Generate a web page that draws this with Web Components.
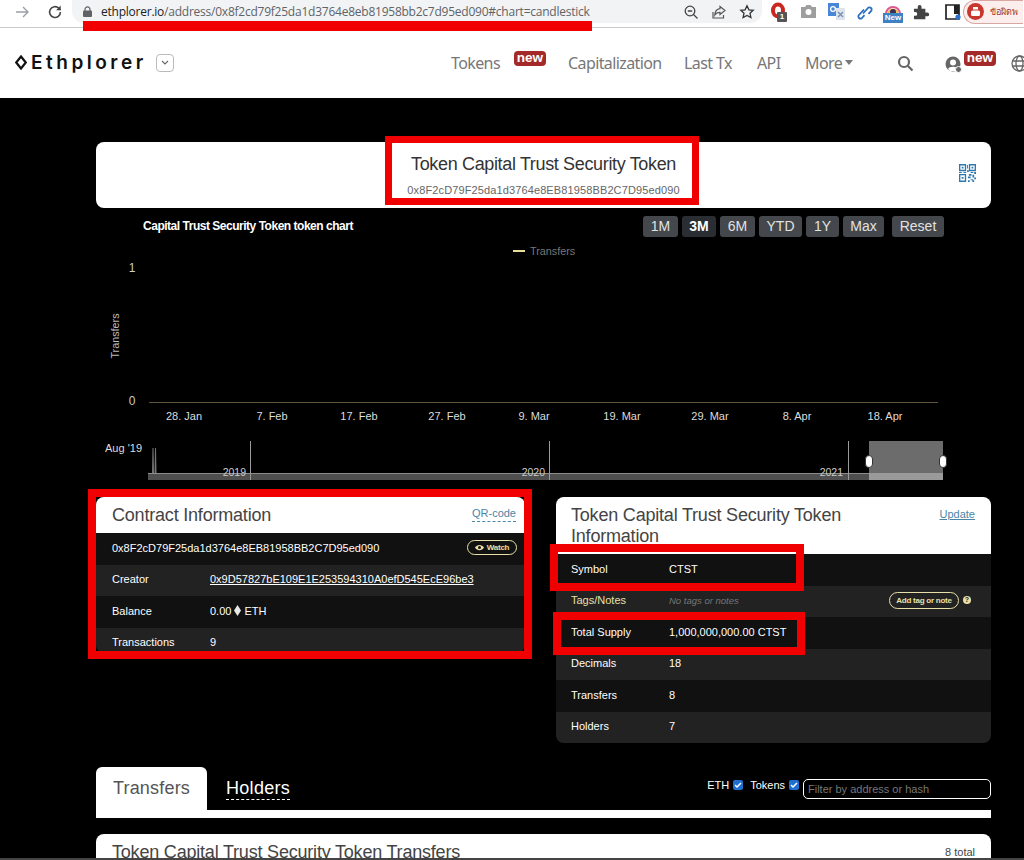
<!DOCTYPE html>
<html lang="en">
<head>
<meta charset="utf-8">
<title>Ethplorer</title>
<style>
  html, body { margin: 0; height: 860px; overflow: hidden; background: #000; }
  body { position: relative; font-family: "Liberation Sans", Arial, sans-serif; }
</style>
</head>
<body>
  <browser-bar url-host="ethplorer.io" url-path="/address/0x8f2cd79f25da1d3764e8eb81958bb2c7d95ed090#chart=candlestick"></browser-bar>
  <site-header></site-header>
  <page-main>
    <title-card heading="Token Capital Trust Security Token" address="0x8F2cD79F25da1d3764e8EB81958BB2C7D95ed090"></title-card>
    <token-chart heading="Capital Trust Security Token token chart"></token-chart>
    <panel-grid>
      <info-panel style="--pad:16px" heading="Contract Information" action="QR-code" dotted>
        <info-row head="0x8F2cD79F25da1d3764e8EB81958BB2C7D95ed090" wide>
          <pill-button slot="extra" icon="eye" small>Watch</pill-button>
        </info-row>
        <info-row alt head="Creator"><a href="#">0x9D57827bE109E1E253594310A0efD545EcE96be3</a></info-row>
        <info-row head="Balance">0.00 <eth-mark></eth-mark> ETH</info-row>
        <info-row alt head="Transactions" cut>9</info-row>
      </info-panel>
      <info-panel style="--pad:15px" heading="Token Capital Trust Security Token Information" action="Update">
        <info-row head="Symbol">CTST</info-row>
        <info-row alt gold head="Tags/Notes">
          <em>No tags or notes</em>
          <pill-button slot="extra">Add tag or note</pill-button>
          <help-dot slot="extra"></help-dot>
        </info-row>
        <info-row head="Total Supply">1,000,000,000.00 CTST</info-row>
        <info-row alt head="Decimals">18</info-row>
        <info-row head="Transfers">8</info-row>
        <info-row alt head="Holders">7</info-row>
      </info-panel>
    </panel-grid>
    <tab-bar></tab-bar>
    <transfers-card heading="Token Capital Trust Security Token Transfers" total="8 total"></transfers-card>
  </page-main>

  <red-mark style="left:83px;top:21px;width:509px;height:10px" solid></red-mark>
  <red-mark style="left:385px;top:136px;width:314px;height:69px"></red-mark>
  <red-mark style="left:88px;top:489px;width:444px;height:170px" thick></red-mark>
  <red-mark style="left:550px;top:544px;width:254px;height:47px" thick></red-mark>
  <red-mark style="left:553px;top:612px;width:252px;height:43px" thick></red-mark>
  <screen-edge></screen-edge>

<script>
  class BrowserBar extends HTMLElement {
    connectedCallback() {
      const host = this.getAttribute("url-host");
      const path = this.getAttribute("url-path");
      this.attachShadow({ mode: "open" }).innerHTML = `
        <style>
          :host { display: flex; align-items: flex-start; height: 27px; background: #fff; border-bottom: 1px solid #c9cacc; font-family: "Open Sans", "Liberation Sans", sans-serif; overflow: hidden; }
          svg { display: block; flex: none; }
          .nav { display: flex; align-items: center; width: 72px; height: 23px; flex: none; padding-left: 15px; box-sizing: border-box; gap: 18px; }
          .url { display: flex; align-items: center; width: 690px; height: 23px; flex: none; box-sizing: border-box; background: #f1f3f4; border-radius: 0 0 12px 12px; padding: 0 7px 0 11px; font-size: 12px; letter-spacing: -.235px; color: #5f6368; white-space: nowrap; }
          .url b { font-weight: 400; color: #202124; }
          .url .text { margin-left: 9px; flex: 1; min-width: 0; overflow: hidden; }
          .tools { display: flex; gap: 12px; align-items: center; }
          .ext { display: flex; align-items: center; height: 23px; margin-left: 8px; gap: 9px; flex: none; }
          .one { position: relative; width: 20px; height: 20px; }
          .cnt { position: absolute; left: 7px; top: 10px; width: 10px; height: 10px; background: #555; color: #fff; font: 700 8px/10px "Liberation Sans", sans-serif; text-align: center; border-radius: 1px; }
          .newb { position: absolute; left: 0; top: 11px; width: 20px; height: 10px; background: #3e82c4; color: #fff; font: 700 8px/10px "Liberation Sans", sans-serif; text-align: center; }
          .prof { display: flex; align-items: center; gap: 6px; margin-left: -9px; width: 60px; height: 24px; box-sizing: border-box; flex: none; border: 1.5px solid #d9a7a2; border-right: 0; background: #fbeeed; border-radius: 12px 0 0 12px; padding-left: 3px; font: 9px "Noto Sans", "DejaVu Sans", sans-serif; color: #9c3a30; white-space: nowrap; }
          .tube { width: 17px; height: 17px; border-radius: 50%; background: #c8372d; flex: none; display: flex; align-items: center; justify-content: center; }
        </style>
        <div class="nav">
          <svg width="14" height="14" viewBox="0 0 14 14" fill="none" stroke="#9aa0a6" stroke-width="1.4"><path d="M1 7h12M8 2l5 5-5 5"/></svg>
          <svg width="16" height="16" viewBox="0 0 16 16" fill="none" stroke="#444" stroke-width="1.6"><path d="M13.4 8a5.4 5.4 0 1 1-1.6-3.8L13.5 6"/><path d="M13.7 1.6v4.6H9.1" fill="#444" stroke="none"/></svg>
        </div>
        <div class="url">
          <svg width="9" height="11" viewBox="0 0 9 11"><path d="M2 5V3.4a2.5 2.5 0 0 1 5 0V5" fill="none" stroke="#5f6368" stroke-width="1.2"/><rect y="4.6" width="9" height="6.4" rx="1" fill="#5f6368"/></svg>
          <span class="text"><b>${host}</b>${path}</span>
          <div class="tools">
            <svg width="16" height="16" viewBox="0 0 16 16" fill="none" stroke="#444" stroke-width="1.3"><circle cx="7" cy="7" r="4.8"/><path d="M10.5 10.5L14.5 14.5M4.8 7h4.4"/></svg>
            <svg width="16" height="16" viewBox="0 0 16 16" fill="none" stroke="#555" stroke-width="1.2"><path d="M2 8v6h10.5v-3"/><path d="M9 2.5l5 4-5 4V8.3C6.5 8.3 5 9.2 3.8 11 4 7.6 6 5 9 4.7z"/></svg>
            <svg width="16" height="16" viewBox="0 0 16 16" fill="none" stroke="#333" stroke-width="1.3"><path d="M8 1.8l1.9 4 4.3.5-3.2 3 .9 4.3L8 11.4l-3.9 2.2.9-4.3-3.2-3 4.3-.5z"/></svg>
          </div>
        </div>
        <div class="ext">
          <div class="one"><svg width="18" height="18" viewBox="0 0 18 18" fill="none" stroke="#c8281e" stroke-width="4"><ellipse cx="8" cy="8.5" rx="5" ry="6"/></svg><span class="cnt">1</span></div>
          <svg width="19" height="19" viewBox="0 0 19 19"><path d="M2 5h4l1.5-2h4L13 5h4v11H2z" fill="#9e9e9e"/><circle cx="9.5" cy="10" r="3" fill="#fff"/></svg>
          <svg width="19" height="19" viewBox="0 0 19 19"><rect x="1" y="1" width="11" height="13" fill="#4a86d8"/><path d="M9 6h9v12H9z" fill="#dfe4ea"/><circle cx="6" cy="7" r="2.4" fill="none" stroke="#fff" stroke-width="1.3"/><path d="M11 10l5 5M16 10l-5 5" stroke="#6f8fb5" stroke-width="1.3"/></svg>
          <svg width="19" height="19" viewBox="0 0 19 19" fill="none" stroke="#2a6fc0" stroke-width="1.8"><path d="M8 11.5l5.5-6a2.3 2.3 0 0 1 3 3l-3 3.3"/><path d="M9 7.500l-5.500 6a2.300 2.300 0 0 0 3 3l3-3.300"/></svg>
          <div class="one"><svg width="20" height="12" viewBox="0 0 20 12" fill="none"><path d="M3 12a7 7 0 0 1 14 0" stroke="#e0568f" stroke-width="2"/><path d="M5.500 12a4.500 4.500 0 0 1 9 0" stroke="#f0b840" stroke-width="2"/><circle cx="10" cy="10" r="3" fill="#3a2f55"/></svg><span class="newb">New</span></div>
          <svg width="17" height="17" viewBox="0 0 17 17" style="margin-left:1px"><path d="M1 6h4V4a2 2 0 0 1 4 0v2h4v4h2a2 2 0 0 1 0 4h-2v3H1v-3.500h1.500a2 2 0 0 0 0-4H1z" fill="#444" transform="scale(.95)"/></svg>
          <svg width="20" height="20" viewBox="0 0 20 20" style="margin-left:4px"><path d="M3 3h13v14H3z" fill="none" stroke="#222" stroke-width="1.700"/><path d="M11 3h5v9h-5z" fill="#222"/><circle cx="15" cy="15" r="2.600" fill="#2a72d0"/></svg>
          <div class="prof"><span class="tube"><svg width="11" height="11" viewBox="0 0 11 11"><rect x="1" y="4.500" width="9" height="5.500" rx="1.500" fill="#fff"/><rect x="3" y="1" width="5" height="2.500" fill="#fff"/></svg></span><span>ข้อผิดพ</span></div>
        </div>`;
    }
  }

  class NewBadge extends HTMLElement {
    connectedCallback() {
      this.attachShadow({ mode: "open" }).innerHTML = `
        <style>
          :host { display: inline-block; position: relative; width: 32px; height: 15px; background: #a32a28; border-radius: 4px; color: #fff; font: 700 13.5px/13px "Liberation Sans", sans-serif; text-align: center; }
        </style>new`;
    }
  }

  class SiteHeader extends HTMLElement {
    connectedCallback() {
      this.attachShadow({ mode: "open" }).innerHTML = `
        <style>
          :host { display: flex; align-items: center; height: 70px; background: #fff; color: #777; font: 16px "Noto Sans", "Open Sans", sans-serif; letter-spacing: -.6px; white-space: nowrap; overflow: hidden; }
          .logo { display: flex; align-items: center; width: 156px; flex: none; padding-left: 15px; box-sizing: border-box; color: #111; font: 600 19px "Inter", sans-serif; letter-spacing: 3.500px; margin-top: -1px; }
          .logo svg { margin-right: 4px; }
          .drop { display: flex; align-items: center; justify-content: center; width: 18px; height: 18px; box-sizing: border-box; flex: none; border: 1px solid #bbb; border-radius: 4px; }
          nav { display: flex; align-items: center; margin-left: 277px; height: 100%; }
          nav span.i { display: block; flex: none; }
          new-badge { margin-top: -10px; flex: none; letter-spacing: 0; }
          .caret { width: 0; height: 0; border: 4.500px solid transparent; border-top: 5px solid #777; border-bottom: 0; margin-left: 5px; margin-top: -2px; }
          svg { flex: none; display: block; }
        </style>
        <div class="logo">
          <svg width="12" height="15" viewBox="0 0 12 15" fill="none" stroke="#111" stroke-width="2.200"><path d="M6 1.500L10.800 7.500 6 13.500 1.200 7.500z"/></svg>Ethplorer
        </div>
        <div class="drop"><svg width="10" height="6" viewBox="0 0 10 6" fill="none" stroke="#666" stroke-width="1.100"><path d="M2 1l3 3 3-3"/></svg></div>
        <nav>
          <span class="i" style="width:48px">Tokens</span>
          <new-badge style="margin-left:15px"></new-badge>
          <span class="i" style="margin-left:22px;width:92px">Capitalization</span>
          <span class="i" style="margin-left:24px;width:50px">Last Tx</span>
          <span class="i" style="margin-left:23px;width:24px">API</span>
          <span class="i" style="margin-left:24px;width:35px">More</span>
          <span class="caret"></span>
          <svg style="margin-left:44px" width="17" height="17" viewBox="0 0 17 17" fill="none" stroke="#666" stroke-width="2.200"><circle cx="7" cy="7" r="5"/><path d="M10.500 10.500L15.500 15.500"/></svg>
          <svg style="margin-left:31px;margin-top:2px" width="17" height="17" viewBox="0 0 17 17"><circle cx="8" cy="8" r="7.500" fill="#666"/><circle cx="8" cy="6.500" r="3" fill="#fff"/><path d="M3 13c1-3 9-3 10 0l-2 2H5z" fill="#fff"/><circle cx="13.500" cy="13.500" r="3" fill="#666" stroke="#fff"/></svg>
          <new-badge style="margin-left:2px"></new-badge>
          <svg style="margin-left:15px" width="17" height="17" viewBox="0 0 17 17" fill="none" stroke="#666" stroke-width="1.300"><circle cx="8.500" cy="8.500" r="7.500"/><ellipse cx="8.500" cy="8.500" rx="3.500" ry="7.500"/><path d="M1 6h15M1 11h15"/></svg>
        </nav>`;
    }
  }

  class PageMain extends HTMLElement {
    connectedCallback() {
      this.attachShadow({ mode: "open" }).innerHTML = `
        <style>
          :host { display: flex; flex-direction: column; padding: 44px 33px 0 96px; background: #000; }
        </style>
        <slot></slot>`;
    }
  }

  class TitleCard extends HTMLElement {
    connectedCallback() {
      this.attachShadow({ mode: "open" }).innerHTML = `
        <style>
          :host { display: grid; grid-template-columns: 1fr auto; align-items: center; height: 66px; padding-left: 32px; background: #fff; border-radius: 8px; }
          .t { text-align: center; }
          h1 { margin: 0; font-weight: 400; font-size: 18px; line-height: 22px; letter-spacing: -.35px; color: #333; }
          p { margin: 8px 0 0; font-size: 11px; line-height: 15px; letter-spacing: .12px; color: #666; }
          svg { display: block; margin: -4px 15px 0 0; }
        </style>
        <div class="t">
          <h1>${this.getAttribute("heading")}</h1>
          <p>${this.getAttribute("address")}</p>
        </div>
        <svg width="17" height="18" viewBox="0 0 19 20" fill="#2f78ad">
          <path fill-rule="evenodd" d="M0 0h8v8H0zM1.500 1.500v5h5v-5zM11 0h8v8h-8zM12.500 1.500v5h5v-5zM0 11h8v9H0zM1.500 12.500v6h5v-6z"/>
          <path d="M3 3h2v2H3zM14 3h2v2h-2zM3 14.500h2v2H3zM9 1h1v4H9zM9 7h2v2H9zM0 9h3v1H0zM5 9h3v1H5zM13 9h3v1h-3zM17 9h2v2h-2zM11 11h3v2h-3zM15 12h2v3h-2zM10 14h3v2h-3zM17 15h2v2h-2zM13 17h3v1h-3zM10 18h2v2h-2zM15 18h2v2h-2z"/>
        </svg>`;
    }
  }

  class TokenChart extends HTMLElement {
    connectedCallback() {
      const ranges = [["1M", 35], ["3M", 34, true], ["6M", 35], ["YTD", 43], ["1Y", 33], ["Max", 41]];
      const buttons = ranges.map(([t, w, on]) => `<span class="btn${on ? " on" : ""}" style="width:${w}px">${t}</span>`).join("");
      const ticks = [[184, "28. Jan"], [272, "7. Feb"], [359, "17. Feb"], [447, "27. Feb"], [534, "9. Mar"], [622, "19. Mar"], [710, "29. Mar"], [797, "8. Apr"], [885, "18. Apr"]];
      const labels = ticks.map(([x, t]) => `<text x="${x}" y="420" text-anchor="middle" fill="#ddd" font-size="11">${t}</text>`).join("");
      this.attachShadow({ mode: "open" }).innerHTML = `
        <style>
          :host { display: block; height: 277px; margin-bottom: 12px; font-family: "Liberation Sans", sans-serif; }
          .head { display: flex; align-items: center; height: 21px; padding: 8px 47px 0 47px; }
          .title { flex: 1; margin-top: -2px; color: #fff; font-weight: 700; font-size: 12px; letter-spacing: -.48px; }
          .btns { display: flex; gap: 4px; }
          .btn { display: block; height: 21px; line-height: 21px; text-align: center; background: #44474b; border-radius: 3px; color: #e2e2e2; font-size: 14px; }
          .btn.on { background: #2a2d31; color: #fff; font-weight: 700; }
          .btn.reset { margin-left: 4px; width: 52px; }
          svg { display: block; }
        </style>
        <div class="head">
          <div class="title">${this.getAttribute("heading")}</div>
          <div class="btns">${buttons}<span class="btn reset">Reset</span></div>
        </div>
        <svg width="895" height="248" viewBox="96 237 895 248" font-family="Liberation Sans, sans-serif">
          <path d="M513 251h12" stroke="#e8dc9a" stroke-width="2"/>
          <text x="530" y="255" fill="#777" font-size="10.800">Transfers</text>
          <text x="119" y="336" fill="#bbb" font-size="10.800" text-anchor="middle" transform="rotate(-90 119 336)">Transfers</text>
          <text x="132" y="272" fill="#ccc" font-size="12" text-anchor="middle">1</text>
          <text x="132" y="405" fill="#ccc" font-size="12" text-anchor="middle">0</text>
          <path d="M149 402.500H938" stroke="#5f563a" stroke-width="1"/>
          ${labels}
          <text x="142" y="452" fill="#ddd" font-size="11" text-anchor="end">Aug '19</text>
          <path d="M148 473h721v7H148z" fill="#4f4f4f"/>
          <path d="M148 473.500h721" stroke="#8c8c8c"/>
          <path d="M152 473l.5-25h1l.5 25zM154.500 473l.5-25h1l.5 25z" fill="#777"/>
          <path d="M250.500 441v39M549.500 441v39M848.500 441v39" stroke="#9a9a9a"/>
          <text x="246" y="476" text-anchor="end" fill="#ccc" font-size="10.500">2019</text>
          <text x="545" y="476" text-anchor="end" fill="#ccc" font-size="10.500">2020</text>
          <text x="843" y="476" text-anchor="end" fill="#ccc" font-size="10.500">2021</text>
          <rect x="869" y="441" width="74" height="32" fill="#6c6c6c"/>
          <rect x="869" y="473" width="74" height="7" fill="#9a9a9a"/>
          <rect x="865.500" y="455.500" width="7" height="12" rx="3.500" fill="#fff" stroke="#333"/>
          <rect x="939.500" y="455.500" width="7" height="12" rx="3.500" fill="#fff" stroke="#333"/>
        </svg>`;
    }
  }

  class PanelGrid extends HTMLElement {
    connectedCallback() {
      this.attachShadow({ mode: "open" }).innerHTML = `
        <style>
          :host { display: grid; grid-template-columns: 429px 435px; column-gap: 31px; align-items: start; }
        </style>
        <slot></slot>`;
    }
  }

  class InfoPanel extends HTMLElement {
    connectedCallback() {
      const dotted = this.hasAttribute("dotted");
      this.attachShadow({ mode: "open" }).innerHTML = `
        <style>
          :host { display: block; border-radius: 8px; overflow: hidden; background: #111; }
          header { display: grid; grid-template-columns: 1fr auto; column-gap: 40px; background: #fff; padding: 8px 16px 7px var(--pad, 15px); }
          h2 { margin: 0; font-weight: 400; font-size: 18px; line-height: 21px; letter-spacing: -.2px; color: #444; }
          a { font-size: 11px; line-height: 18px; color: #4a86a8; text-decoration: ${dotted ? "none" : "underline"}; ${dotted ? "border-bottom: 1px dashed #4a86a8; height: 15px; line-height: 15px; margin: 1px -7px 0 0;" : ""} }
        </style>
        <header><h2>${this.getAttribute("heading")}</h2><a href="#">${this.getAttribute("action")}</a></header>
        <slot></slot>`;
    }
  }

  class InfoRow extends HTMLElement {
    connectedCallback() {
      const wide = this.hasAttribute("wide");
      const gold = this.hasAttribute("gold");
      const cut = this.hasAttribute("cut");
      const bg = this.hasAttribute("alt") ? "#222" : "#111";
      this.attachShadow({ mode: "open" }).innerHTML = `
        <style>
          :host { display: grid; grid-template-columns: ${wide ? "1fr" : "98px 1fr"} auto; align-items: center; height: ${cut ? 25 : 31.500}px; box-sizing: border-box; padding: ${cut ? "3px" : 0} 8px ${cut ? 0 : "2px"} var(--pad, 15px); background: ${bg}; color: #fff; font-size: 11px; }
          .h { color: ${gold ? "#e8e0a8" : "#fff"}; }
          .x { display: flex; align-items: center; gap: 3px; }
          ::slotted(a) { color: #fff; }
          ::slotted(em) { color: #777; font-size: 9.500px; }
        </style>
        <div class="h">${this.getAttribute("head")}</div>
        ${wide ? "" : "<div><slot></slot></div>"}
        <div class="x"><slot name="extra"></slot></div>`;
    }
  }

  class PillButton extends HTMLElement {
    connectedCallback() {
      const small = this.hasAttribute("small");
      const eye = this.getAttribute("icon") === "eye"
        ? `<svg width="9" height="7" viewBox="0 0 9 7"><path d="M0 3.500C2 0 7 0 9 3.500 7 7 2 7 0 3.500z" fill="#e8e0a8"/><circle cx="4.500" cy="3.500" r="1.500" fill="#111"/></svg>`
        : "";
      this.attachShadow({ mode: "open" }).innerHTML = `
        <style>
          :host { display: inline-flex; align-items: center; justify-content: center; gap: 3px; height: ${small ? 15 : 17}px; width: ${small ? 50 : 70}px; box-sizing: border-box; border: 1px solid #e8e0a8; border-radius: 9px; color: #e8e0a8; font-weight: 700; font-size: 8px; letter-spacing: -.25px; white-space: nowrap; }
        </style>
        ${eye}<slot></slot>`;
    }
  }

  class HelpDot extends HTMLElement {
    connectedCallback() {
      this.attachShadow({ mode: "open" }).innerHTML = `
        <style>
          :host { display: block; width: 8px; height: 8px; margin: 0 12px 0 1px; border-radius: 50%; background: #e8e0a8; color: #222; font: 700 7px/8px "Liberation Sans", sans-serif; text-align: center; }
        </style>?`;
    }
  }

  class EthMark extends HTMLElement {
    connectedCallback() {
      this.attachShadow({ mode: "open" }).innerHTML = `
        <style>
          :host { display: inline-block; vertical-align: -1px; }
          svg { display: block; }
        </style>
        <svg width="7" height="11" viewBox="0 0 7 11"><path d="M3.500 0L7 5.500 3.500 11 0 5.500z" fill="#e8e8e8"/></svg>`;
    }
  }

  class TabBar extends HTMLElement {
    connectedCallback() {
      this.attachShadow({ mode: "open" }).innerHTML = `
        <style>
          :host { display: block; margin-top: 24px; }
          .row { display: flex; height: 43px; color: #fff; }
          .tab { display: flex; align-items: flex-start; justify-content: center; width: 111px; height: 43px; box-sizing: border-box; padding-top: 11px; background: #fff; border-radius: 6px 6px 0 0; color: #555; font-size: 18px; line-height: 21px; letter-spacing: .2px; }
          .other { margin: 11px 0 0 19px; height: 21px; font-size: 18px; line-height: 21px; letter-spacing: .3px; border-bottom: 1px dashed #fff; }
          .side { display: flex; align-items: flex-start; margin-left: auto; font-size: 11px; padding-top: 12px; }
          .box { display: block; width: 10px; height: 10px; margin: 1px 7px 0 4px; background: #1f6fd0; border-radius: 2px; }
          .box.last { margin-right: 4px; }
          .box svg { display: block; }
          .filter { width: 188px; height: 20px; box-sizing: border-box; border: 1px solid #fff; border-radius: 5px; margin-top: 0; padding-left: 4px; color: #777; line-height: 18px; }
          .rule { height: 8px; background: #fff; }
        </style>
        <div class="row">
          <div class="tab">Transfers</div>
          <div class="other">Holders</div>
          <div class="side">
            <span>ETH</span><span class="box"><svg width="10" height="10" viewBox="0 0 10 10" fill="none" stroke="#fff" stroke-width="1.500"><path d="M2 5l2 2 4-4"/></svg></span>
            <span>Tokens</span><span class="box last"><svg width="10" height="10" viewBox="0 0 10 10" fill="none" stroke="#fff" stroke-width="1.500"><path d="M2 5l2 2 4-4"/></svg></span>
            <div class="filter">Filter by address or hash</div>
          </div>
        </div>
        <div class="rule"></div>`;
    }
  }

  class TransfersCard extends HTMLElement {
    connectedCallback() {
      this.attachShadow({ mode: "open" }).innerHTML = `
        <style>
          :host { display: flex; justify-content: space-between; align-items: flex-start; margin-top: 16px; height: 40px; padding: 8px 16px 0; box-sizing: border-box; background: #fff; border-radius: 8px 8px 0 0; color: #444; }
          h2 { margin: 0; font-weight: 400; font-size: 18px; line-height: 21px; letter-spacing: -.2px; }
          span { font-size: 11px; line-height: 20px; color: #444; }
        </style>
        <h2>${this.getAttribute("heading")}</h2><span>${this.getAttribute("total")}</span>`;
    }
  }

  // annotation boxes drawn over the screenshot
  class RedMark extends HTMLElement {
    connectedCallback() {
      const border = this.hasAttribute("solid") ? 0 : this.hasAttribute("thick") ? 8 : 7;
      this.attachShadow({ mode: "open" }).innerHTML = `
        <style>
          :host { display: block; position: absolute; box-sizing: border-box; border: ${border}px solid #f00000; ${this.hasAttribute("solid") ? "background: #f00000;" : ""} }
        </style>`;
    }
  }

  class ScreenEdge extends HTMLElement {
    connectedCallback() {
      this.attachShadow({ mode: "open" }).innerHTML = `
        <style>
          :host { display: block; position: absolute; left: 0; right: 0; top: 858px; height: 2px; background: #444; }
        </style>`;
    }
  }

  customElements.define("browser-bar", BrowserBar);
  customElements.define("new-badge", NewBadge);
  customElements.define("site-header", SiteHeader);
  customElements.define("page-main", PageMain);
  customElements.define("title-card", TitleCard);
  customElements.define("token-chart", TokenChart);
  customElements.define("panel-grid", PanelGrid);
  customElements.define("info-panel", InfoPanel);
  customElements.define("info-row", InfoRow);
  customElements.define("pill-button", PillButton);
  customElements.define("help-dot", HelpDot);
  customElements.define("eth-mark", EthMark);
  customElements.define("tab-bar", TabBar);
  customElements.define("transfers-card", TransfersCard);
  customElements.define("red-mark", RedMark);
  customElements.define("screen-edge", ScreenEdge);
</script>
</body>
</html>
